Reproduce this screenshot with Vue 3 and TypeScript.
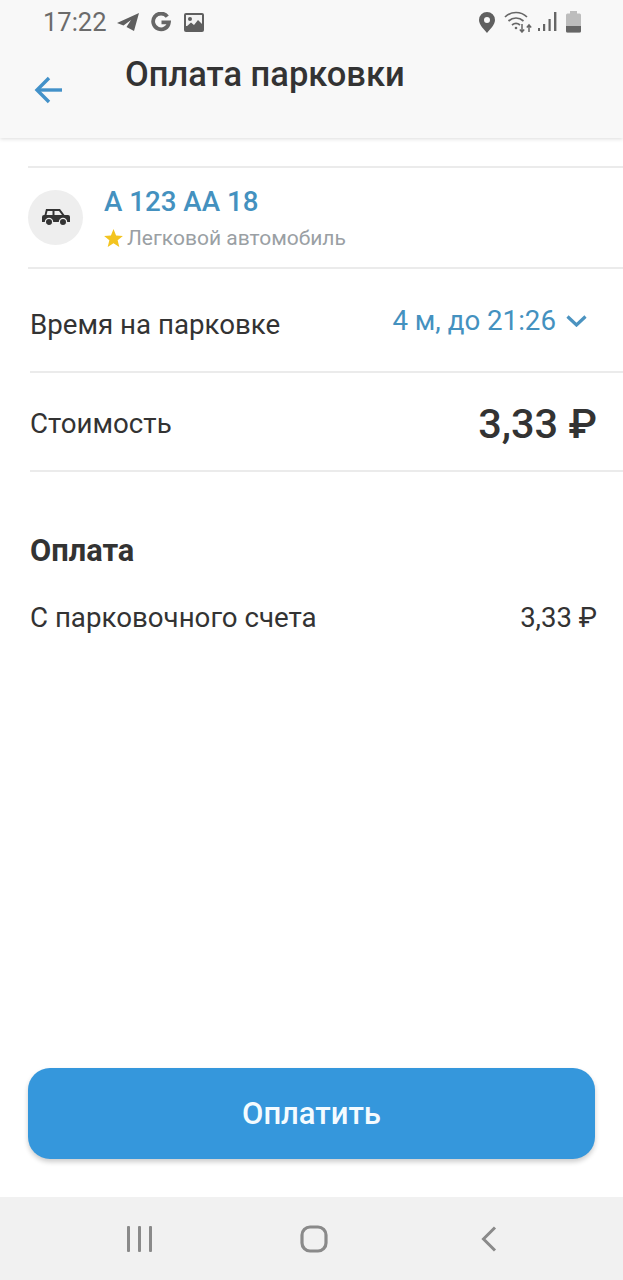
<script setup lang="ts">
const plate: string = 'А 123 АА 18'
</script>

<template>
  <div class="page">
    <header class="top">
      <div class="status">
        <div class="status-left">
          <span class="clock">17:22</span>
          <svg width="22" height="18" viewBox="0 0 22 18"><path d="M22 0 L0 10 L6.500 12.500 L14 7 L9.500 14 L17 18 Z" fill="#5f5f5f"/></svg>
          <svg class="g" width="20" height="20" viewBox="0 0 20 20"><path d="M16.300 4.600 A7.900 7.900 0 1 0 17.900 10.400 H10.500" fill="none" stroke="#666" stroke-width="3.800"/></svg>
          <svg class="pic" width="20" height="19" viewBox="0 0 20 19"><rect width="20" height="19" rx="2" fill="#5f5f5f"/><rect x="2" y="2" width="16" height="11" fill="#f2f2f2"/><circle cx="6" cy="6" r="2" fill="#5f5f5f"/><path d="M2 14 L7 9.500 L10 12 L14 7 L18 11 V15 H2 Z" fill="#5f5f5f"/></svg>
        </div>
        <div class="status-right">
          <svg width="16" height="21" viewBox="0 0 16 21"><path fill-rule="evenodd" d="M8 0 A8 8 0 0 1 16 8 C16 13 11 17 8 21 C5 17 0 13 0 8 A8 8 0 0 1 8 0 Z M8 5 A3 3 0 1 0 8 11 A3 3 0 1 0 8 5 Z" fill="#5f5f5f"/></svg>
          <svg width="28" height="22" viewBox="0 0 28 22" fill="none" stroke="#666" stroke-width="1.700"><path d="M1 6 C7 0 17 0 23 6"/><path d="M4.500 10 C9 6 15 6 19.500 10"/><path d="M8 14 C10.500 12 13.500 12 16 14"/><circle cx="12" cy="17" r="1.300" fill="#666" stroke="none"/><path d="M18 13 V21 M15.800 18.500 L18 21 L20.200 18.500 M25 21 V14 M22.800 16.500 L25 14 L27.200 16.500" stroke-width="1.500"/></svg>
          <svg class="signal" width="19" height="20" viewBox="0 0 19 20" fill="#666"><rect x="0" y="16" width="2" height="3"/><rect x="5" y="12" width="2.200" height="7"/><rect x="10.500" y="7" width="2.200" height="12"/><rect x="16" y="0" width="2.400" height="19"/></svg>
          <svg width="15" height="22" viewBox="0 0 15 22"><rect x="4" y="0" width="7" height="3" fill="#bdbdbd"/><rect x="0" y="2.500" width="15" height="19" rx="1.500" fill="#bdbdbd"/><path d="M0 15 H15 V20 A1.500 1.500 0 0 1 13.500 21.500 H1.500 A1.500 1.500 0 0 1 0 20 Z" fill="#666"/></svg>
        </div>
      </div>
      <div class="bar">
        <svg class="back" width="29" height="28" viewBox="0 0 29 28" fill="none" stroke="#4291c9" stroke-width="3.400"><path d="M28 14 H3"/><path d="M15 2 L3 14 L15 26"/></svg>
        <h1>Оплата парковки</h1>
      </div>
    </header>

    <main class="content">
      <section class="vehicle">
        <div class="avatar">
          <svg width="28" height="17" viewBox="0 0 28 17"><path d="M4 0 H18 L22.500 6 H26 Q28 6 28 8 V13 H0 V8 Q0 6 2 6 H2.500 Z" fill="#333"/><path d="M5.500 2 H10.500 V6 H4.500 Z M12.500 2 H17 L20 6 H12.500 Z" fill="#eee"/><circle cx="7" cy="13" r="3.600" fill="#333" stroke="#eee" stroke-width="1.200"/><circle cx="21" cy="13" r="3.600" fill="#333" stroke="#eee" stroke-width="1.200"/></svg>
        </div>
        <div class="vehicle-info">
          <div class="plate">{{ plate }}</div>
          <div class="kind">
            <svg width="19" height="18" viewBox="0 0 24 23"><path d="M12 0 L15.300 8.200 L24 8.800 L17.300 14.400 L19.400 23 L12 18.300 L4.600 23 L6.700 14.400 L0 8.800 L8.700 8.200 Z" fill="#f3c41f"/></svg>
            <span>Легковой автомобиль</span>
          </div>
        </div>
      </section>

      <section class="row row-time">
        <span class="label">Время на парковке</span>
        <span class="time">
          4 м, до 21:26
          <svg width="21" height="12" viewBox="0 0 21 12" fill="none" stroke="#4b93c0" stroke-width="3.200"><path d="M1.500 1.500 L10.500 10 L19.500 1.500"/></svg>
        </span>
      </section>

      <section class="row row-cost">
        <span class="label">Стоимость</span>
        <span class="cost">3,33 ₽</span>
      </section>

      <h2>Оплата</h2>
      <div class="pay-row">
        <span class="label">С парковочного счета</span>
        <span class="pay-sum">3,33 ₽</span>
      </div>

      <button class="pay" type="button">Оплатить</button>
    </main>

    <nav class="nav">
      <svg width="26" height="26" viewBox="0 0 26 26" fill="#8a8a8a"><rect x="1" y="0" width="3" height="26" rx="1"/><rect x="12" y="0" width="3" height="26" rx="1"/><rect x="23" y="0" width="3" height="26" rx="1"/></svg>
      <svg width="28" height="28" viewBox="0 0 28 28" fill="none" stroke="#8a8a8a" stroke-width="3.200"><rect x="2" y="2" width="24" height="24" rx="8"/></svg>
      <svg class="nav-back" width="16" height="26" viewBox="0 0 16 26" fill="none" stroke="#8a8a8a" stroke-width="3"><path d="M14 1.500 L2.500 13 L14 24.500"/></svg>
    </nav>
  </div>
</template>

<style>
html, body { margin: 0; background: #fff; }
</style>

<style scoped>
.page {
  width: 623px;
  height: 1280px;
  display: flex;
  flex-direction: column;
  overflow: hidden;
  background: #fff;
  color: #333;
  font-family: Roboto, "Noto Sans", sans-serif;
}
.top {
  height: 138px;
  flex: none;
  background: #f8f8f8;
  box-shadow: 0 1px 4px rgba(0, 0, 0, 0.14);
}
.status {
  height: 44px;
  padding: 0 42px 0 43px;
  display: flex;
  justify-content: space-between;
  align-items: center;
}
.status-left, .status-right { display: flex; align-items: center; }
.status-left { gap: 10px; }
.status-right { gap: 9px; }
.clock { font-size: 25.500px; color: #6b6b6b; }
.g { margin-left: 2px; }
.pic { margin-left: 3px; }
.signal { margin-left: -3px; }
.bar {
  display: flex;
  align-items: flex-start;
  padding-left: 34px;
}
.back { margin-top: 32px; }
h1 {
  margin: 10px 0 0 62px;
  font-size: 34.500px;
  line-height: 40px;
  font-weight: 500;
  color: #333;
}
.content {
  flex: 1;
  display: flex;
  flex-direction: column;
  padding-top: 28px;
}
.vehicle {
  height: 99px;
  margin-left: 28px;
  border-top: 2px solid #ebebeb;
  border-bottom: 2px solid #ebebeb;
  display: flex;
  align-items: center;
}
.avatar {
  width: 55px;
  height: 55px;
  border-radius: 50%;
  background: #eeeeee;
  display: flex;
  align-items: center;
  justify-content: center;
}
.vehicle-info { margin-left: 21px; padding-top: 2px; }
.plate { font-size: 27.700px; line-height: 34px; font-weight: 500; color: #4491bf; }
.kind { display: flex; align-items: center; gap: 4px; margin-top: 5px; font-size: 21px; line-height: 28px; color: #9aa0a4; }
.row {
  margin-left: 30px;
  padding-right: 26px;
  display: flex;
  align-items: center;
  justify-content: space-between;
  border-bottom: 2px solid #ebebeb;
}
.row-time { height: 102px; }
.row-cost { height: 94px; padding-top: 3px; }
.label { font-size: 27.700px; color: #333; font-weight: 400; }
.row-time .label { margin-top: 8px; }
.time { display: flex; align-items: center; gap: 10px; padding-right: 10px; font-size: 27.700px; color: #4491bf; margin-top: 1px; }
.cost { font-size: 41.500px; font-weight: 500; color: #333; }
h2 { margin: 61px 0 0 30px; font-size: 30.800px; line-height: 36px; font-weight: 700; color: #333; }
.pay-row {
  margin: 32px 26px 0 30px;
  display: flex;
  align-items: center;
  justify-content: space-between;
}
.pay-sum { font-size: 27.500px; }
.pay {
  margin: auto 28px 38px;
  height: 91px;
  border: 0;
  border-radius: 22px;
  background: #3597dc;
  color: #f4fbff;
  font: 500 31px Roboto, sans-serif;
  box-shadow: 0 3px 5px rgba(0, 0, 0, 0.2);
}
.nav {
  height: 83px;
  flex: none;
  background: #f1f1f1;
  display: flex;
  align-items: center;
  gap: 148px;
  padding-left: 126px;
}
.nav-back { margin-left: 5px; }
</style>
